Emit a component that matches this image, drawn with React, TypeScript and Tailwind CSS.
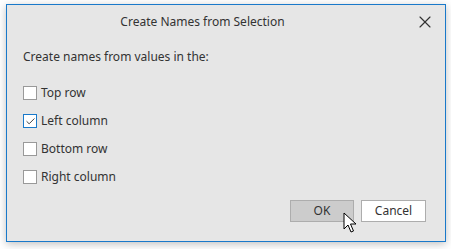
import { Check, X } from 'lucide-react'

const options = [
    { label: 'Top row', checked: false },
    { label: 'Left column', checked: true },
    { label: 'Bottom row', checked: false },
    { label: 'Right column', checked: false },
]

function Cursor() {
    return (
        <svg className="absolute left-[343px] top-[212px]" width="14" height="22" viewBox="0 0 14 22">
            <path
                d="M1 1 L1 17 L5 13 L8 20 L10.5 19 L7.5 12 L13 12 Z"
                fill="white"
                stroke="black"
                strokeWidth="1"
                strokeLinejoin="miter"
            />
        </svg>
    )
}

export default function App() {
    return (
        <div
            className="relative w-[451px] h-[249px] bg-white pt-[4px] pl-[6px]"
            style={{ fontFamily: '"Segoe UI", "Noto Sans", sans-serif' }}
        >
            {/* Dialog */}
            <div className="w-[440px] h-[238px] bg-[#e6e6e6] border border-[#1979ca] shadow-[0_2px_8px_rgba(0,0,0,0.25)] flex flex-col">
                {/* Title bar */}
                <div className="flex items-center h-[32px]">
                    <div className="flex-1 text-center text-[12px] text-[#333] pl-[1px] pt-[1px]">
                        Create Names from Selection
                    </div>
                    <div className="w-[48px] flex justify-center pl-[8px] pt-[1px]">
                        <X className="w-[20px] h-[20px] text-[#333]" strokeWidth={1.4} />
                    </div>
                </div>

                {/* Body */}
                <div className="px-[16px] pt-[12px] flex-1 flex flex-col">
                    <p className="text-[12px] text-[#333] leading-[16px]">Create names from values in the:</p>
                    <div className="flex flex-col gap-[14px] mt-[21px]">
                        {options.map((o) => (
                            <label key={o.label} className="flex items-center gap-[4px] h-[14px] text-[12px] text-[#333]">
                                <span
                                    className={
                                        o.checked
                                            ? 'w-[14px] h-[14px] bg-white border border-[#1979ca] flex items-center justify-center'
                                            : 'w-[14px] h-[14px] bg-white border border-[#999] flex items-center justify-center'
                                    }
                                >
                                    {o.checked && <Check className="w-[11px] h-[11px] text-[#333]" strokeWidth={2} />}
                                </span>
                                <span>{o.label}</span>
                            </label>
                        ))}
                    </div>

                    {/* Footer buttons */}
                    <div className="flex justify-end gap-[7px] mt-auto mb-[19px] pr-[3px]">
                        <button className="w-[64px] h-[22px] bg-[#cccccc] border border-[#adadad] text-[12px] text-[#333]">
                            OK
                        </button>
                        <button className="w-[65px] h-[22px] bg-white border border-[#adadad] text-[12px] text-[#333]">
                            Cancel
                        </button>
                    </div>
                </div>
            </div>
            <Cursor />
        </div>
    )
}
